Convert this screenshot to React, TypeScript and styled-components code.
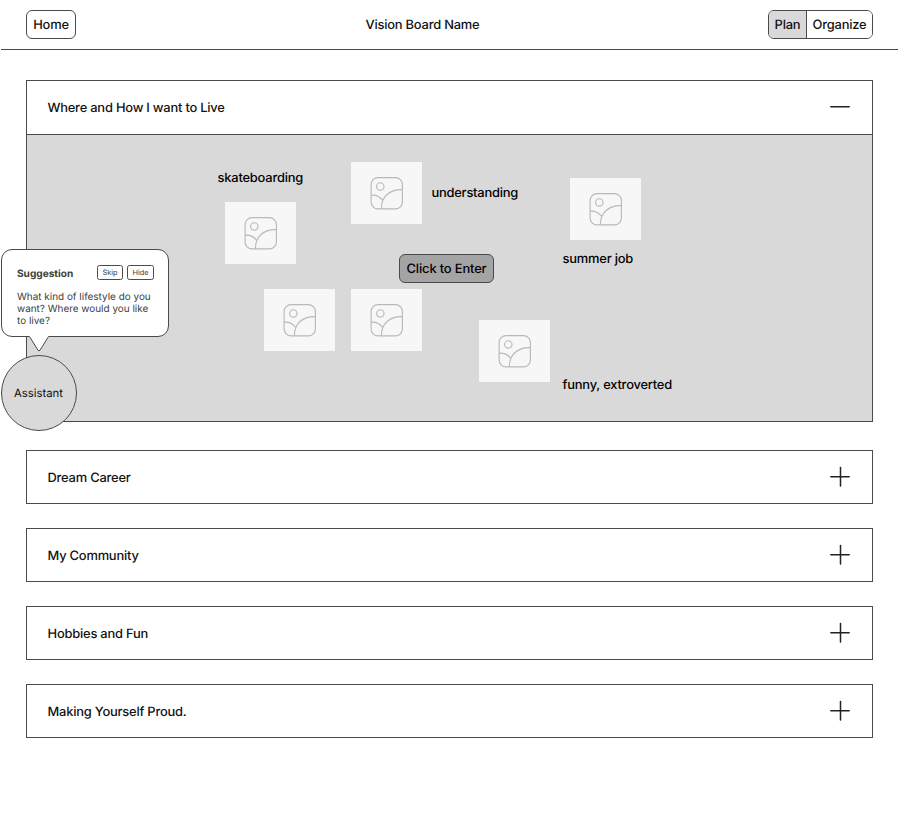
import React from "react";
import styled, { createGlobalStyle } from "styled-components";

const LINE = "#4a4a4a";

const GlobalStyle = createGlobalStyle`
  *, *::before, *::after { box-sizing: border-box; }
  body {
    margin: 0;
    background: #fff;
    color: #111;
    font: 500 12.9px/16px Inter, sans-serif;
    letter-spacing: -0.21px;
    text-rendering: geometricPrecision;
  }
  button {
    font: inherit;
    letter-spacing: inherit;
    color: inherit;
    padding: 3px 0 0;
    margin: 0;
    border: 0;
    background: none;
    white-space: nowrap;
    text-rendering: inherit;
  }
`;

const Page = styled.div`
  position: relative;
  height: 814px;
  overflow: hidden;
`;

const Header = styled.header`
  display: grid;
  grid-template-columns: 1fr auto 1fr;
  align-items: center;
  height: 50px;
  margin-left: 1px;
  padding: 0 25px 0 25px;
  border-bottom: 1px solid ${LINE};
`;

const HomeButton = styled.button`
  justify-self: start;
  width: 50px;
  height: 29px;
  border: 1px solid ${LINE};
  border-radius: 6px;
`;

const Title = styled.h1`
  margin: 0;
  padding-top: 3px;
  font: inherit;
  transform: translateX(-27px);
`;

const Toggle = styled.div`
  justify-self: end;
  display: flex;
  width: 105px;
  height: 29px;
  border: 1px solid ${LINE};
  border-radius: 6px;
  overflow: hidden;
`;

const ToggleOption = styled.button<{ $active?: boolean }>`
  flex: ${(p) => (p.$active ? "0 0 38px" : "1")};
  background: ${(p) => (p.$active ? "#d9d9d9" : "#fff")};
  border-right: ${(p) => (p.$active ? `1px solid ${LINE}` : "0")};
`;

const Main = styled.main`
  display: flex;
  flex-direction: column;
  padding: 30px 25px 0 26px;
`;

const Panel = styled.section<{ $gap?: number }>`
  border: 1px solid ${LINE};
  margin-bottom: ${(p) => p.$gap ?? 24}px;
`;

const PanelHeader = styled.div<{ $open?: boolean }>`
  display: flex;
  align-items: center;
  justify-content: space-between;
  height: ${(p) => (p.$open ? 54 : 52)}px;
  padding: ${(p) => (p.$open ? "0 21px 1px 20.5px" : "0 21px 0 20.5px")};
  border-bottom: ${(p) => (p.$open ? `1px solid ${LINE}` : "0")};
`;

const PanelTitle = styled.h2`
  margin: 0;
  padding-top: 3px;
  font: inherit;
`;

const Canvas = styled.div`
  position: relative;
  height: 286px;
  background: #d9d9d9;
`;

const Word = styled.span<{ $x: number; $y: number }>`
  position: absolute;
  left: ${(p) => p.$x}px;
  top: ${(p) => p.$y}px;
  color: #000;
  white-space: nowrap;
`;

const Picture = styled.div<{ $x: number; $y: number }>`
  position: absolute;
  left: ${(p) => p.$x}px;
  top: ${(p) => p.$y}px;
  display: grid;
  place-items: center;
  width: 70.6px;
  height: 62px;
  background: #f7f7f7;
`;

const EnterButton = styled.button`
  position: absolute;
  left: 372px;
  top: 119px;
  width: 95px;
  height: 29px;
  padding-top: 2px;
  background: #a4a4a4;
  border: 1px solid ${LINE};
  border-radius: 6px;
  color: #000;
  letter-spacing: -0.14px;
`;

const Helper = styled.aside`
  position: absolute;
  left: 1px;
  top: 249px;
  width: 168px;
  letter-spacing: 0;
`;

const Bubble = styled.div`
  height: 88px;
  padding: 15px 14px 0 15px;
  background: #fff;
  border: 1px solid ${LINE};
  border-radius: 11px;
  color: #3c4038;
`;

const BubbleTop = styled.div`
  display: flex;
  align-items: center;
  gap: 4px;
  height: 15px;
  margin-bottom: 11px;
`;

const BubbleTitle = styled.strong`
  flex: 1;
  padding-top: 2px;
  font-size: 10.1px;
  font-weight: 700;
`;

const SmallButton = styled.button<{ $w: number }>`
  width: ${(p) => p.$w}px;
  height: 15px;
  padding: 0;
  border: 1px solid ${LINE};
  border-radius: 2.5px;
  font-size: 7.4px;
  font-weight: 400;
  line-height: 12px;
`;

const Question = styled.p`
  margin: 0;
  font-size: 9.95px;
  font-weight: 400;
  line-height: 12px;
  white-space: nowrap;
`;

const Tail = styled.svg`
  position: absolute;
  left: 26px;
  top: 86px;
`;

const Avatar = styled.div`
  display: grid;
  place-items: center;
  width: 76px;
  height: 76px;
  margin-top: 18px;
  padding-right: 1px;
  background: #d9d9d9;
  border: 1px solid ${LINE};
  border-radius: 50%;
  font-size: 11.3px;
  font-weight: 400;
`;

const PictureIcon = () => (
  <svg width="33" height="33" viewBox="-0.5 0.5 33 33" fill="none" stroke="#b9b9b9" strokeWidth="1.15">
    <rect x="0.6" y="1.1" width="31.3" height="31.3" rx="7" />
    <circle cx="9.8" cy="9.9" r="3.7" />
    <path d="M0.6 18.6C5.6 18.3 9.6 20.1 12.2 24" />
    <path d="M31.9 13.1C19.4 12.5 10.5 20.4 11 32.2" />
  </svg>
);

const ToggleIcon = ({ open }: { open?: boolean }) => (
  <svg width="22" height="22" viewBox="0 0 22 22" fill="none" stroke="#222" strokeWidth="1.5" strokeLinecap="round">
    <path d="M1.8 10.7H20.2" />
    {!open && <path d="M11.5 1.4V19.9" />}
  </svg>
);

const pictures = [
  [324, 27],
  [198, 67],
  [543, 43],
  [237, 154],
  [324, 154],
  [452, 185],
];

const words: [string, number, number][] = [
  ["skateboarding", 190.6, 36],
  ["understanding", 404.4, 51],
  ["summer job", 535.6, 117],
  ["funny, extroverted", 535.6, 243],
];

const sections: [string, number][] = [
  ["Dream Career", 24],
  ["My Community", 24],
  ["Hobbies and Fun", 24],
  ["Making Yourself Proud.", 0],
];

export default function App() {
  return (
    <Page>
      <GlobalStyle />
      <Header>
        <HomeButton>Home</HomeButton>
        <Title>Vision Board Name</Title>
        <Toggle>
          <ToggleOption $active>Plan</ToggleOption>
          <ToggleOption>Organize</ToggleOption>
        </Toggle>
      </Header>
      <Main>
        <Panel $gap={28}>
          <PanelHeader $open>
            <PanelTitle>Where and How I want to Live</PanelTitle>
            <ToggleIcon open />
          </PanelHeader>
          <Canvas>
            {pictures.map(([x, y]) => (
              <Picture key={`${x}-${y}`} $x={x} $y={y}>
                <PictureIcon />
              </Picture>
            ))}
            {words.map(([text, x, y]) => (
              <Word key={text} $x={x} $y={y}>{text}</Word>
            ))}
            <EnterButton>Click to Enter</EnterButton>
          </Canvas>
        </Panel>
        {sections.map(([name, gap]) => (
          <Panel key={name} $gap={gap}>
            <PanelHeader>
              <PanelTitle>{name}</PanelTitle>
              <ToggleIcon />
            </PanelHeader>
          </Panel>
        ))}
      </Main>
      <Helper>
        <Bubble>
          <BubbleTop>
            <BubbleTitle>Suggestion</BubbleTitle>
            <SmallButton $w={26}>Skip</SmallButton>
            <SmallButton $w={27}>Hide</SmallButton>
          </BubbleTop>
          <Question>
            What kind of lifestyle do you
            <br />
            want? Where would you like
            <br />
            to live?
          </Question>
        </Bubble>
        <Tail width="24" height="18" viewBox="0 0 24 18">
          <path d="M2.5 0H21.5V1.5L13 15.2Q12 16.5 11 15.2L2.5 1.5Z" fill="#fff" />
          <path d="M2.5 1.5L11 15.2Q12 16.5 13 15.2L21.5 1.5" fill="none" stroke={LINE} />
        </Tail>
        <Avatar>Assistant</Avatar>
      </Helper>
    </Page>
  );
}
